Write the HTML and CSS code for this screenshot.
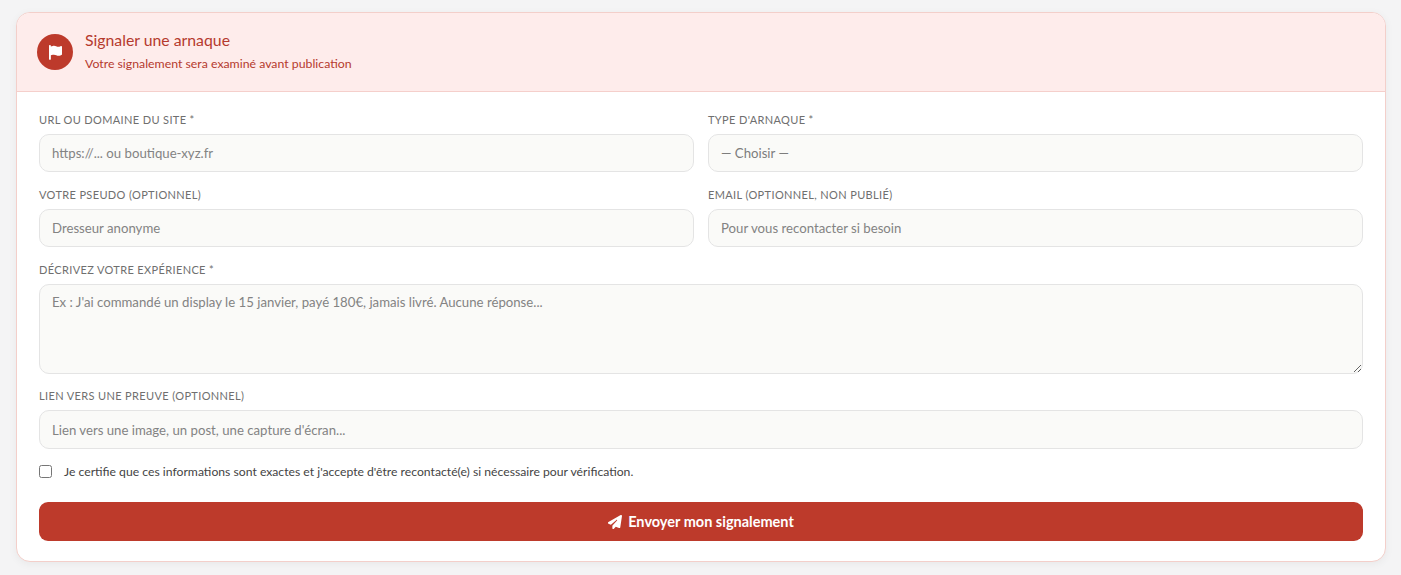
FILE: index.html
```html
<!DOCTYPE html>
<html lang="fr">
<head>
<meta charset="utf-8">
<title>Signaler une arnaque</title>
<link rel="stylesheet" href="styles.css">
</head>
<body>
<section class="card">
  <header class="head">
    <span class="badge">
      <svg class="flag" viewBox="0 0 448 512" aria-hidden="true"><path fill="currentColor" d="M64 32C64 14.300 49.700 0 32 0S0 14.300 0 32V480c0 17.700 14.300 32 32 32s32-14.300 32-32V352l64.300-16.100c41.100-10.300 84.600-5.500 122.500 13.400c44.200 22.100 95.500 24.800 141.700 7.400l34.700-13c12.500-4.700 20.800-16.600 20.800-30V66.100c0-23-24.200-38-44.800-27.700l-9.600 4.800c-46.300 23.200-100.800 23.200-147.100 0c-35.100-17.600-75.400-22-113.500-12.500L64 48V32z"/></svg>
    </span>
    <div class="head-text">
      <h2 class="title">Signaler une arnaque</h2>
      <p class="sub">Votre signalement sera examiné avant publication</p>
    </div>
  </header>
  <form class="form">
    <div class="row">
      <div class="field">
        <label class="label">URL ou domaine du site *</label>
        <input class="input" type="text" placeholder="https://... ou boutique-xyz.fr">
      </div>
      <div class="field">
        <label class="label">Type d'arnaque *</label>
        <div class="input select">— Choisir —</div>
      </div>
    </div>
    <div class="row">
      <div class="field">
        <label class="label">Votre pseudo (optionnel)</label>
        <input class="input" type="text" placeholder="Dresseur anonyme">
      </div>
      <div class="field">
        <label class="label">Email (optionnel, non publié)</label>
        <input class="input" type="text" placeholder="Pour vous recontacter si besoin">
      </div>
    </div>
    <div class="field field-area">
      <label class="label">Décrivez votre expérience *</label>
      <textarea class="input area" placeholder="Ex : J'ai commandé un display le 15 janvier, payé 180€, jamais livré. Aucune réponse..."></textarea>
    </div>
    <div class="field">
      <label class="label">Lien vers une preuve (optionnel)</label>
      <input class="input tall" type="text" placeholder="Lien vers une image, un post, une capture d'écran...">
    </div>
    <label class="check">
      <input class="box" type="checkbox">
      <span>Je certifie que ces informations sont exactes et j'accepte d'être recontacté(e) si nécessaire pour vérification.</span>
    </label>
    <button class="send" type="button">
      <svg class="plane" viewBox="0 0 512 512" aria-hidden="true"><path fill="currentColor" d="M498.100 5.600c10.100 7 15.400 19.100 13.500 31.200l-64 416c-1.500 9.700-7.400 18.200-16 23s-18.900 5.400-28 1.600L284 427.700l-68.500 74.100c-8.900 9.700-22.900 12.900-35.200 8.100S160 493.200 160 480V396.400c0-4 1.500-7.800 4.200-10.700L331.800 202.800c5.800-6.300 5.600-16-.4-22s-15.700-6.400-22-.7L106 360.800 17.700 316.600C7.100 311.300 .3 300.700 0 288.900s5.900-22.800 16.100-28.700l448-256c10.700-6.100 23.900-5.500 34 1.400z"/></svg>
      Envoyer mon signalement
    </button>
  </form>
</section>
</body>
</html>
```
FILE: styles.css
```css
* { box-sizing: border-box; }
html, body { margin: 0; }
body {
  background: #f4f4f5;
  padding: 12px 15px 14px 16px;
  font-family: "Lato", "Noto Sans", sans-serif;
  color: #333;
}
.card {
  background: #fff;
  border: 1px solid #f3cfca;
  border-radius: 14px;
  overflow: hidden;
  box-shadow: 0 2px 8px rgba(0,0,0,.05);
  height: 550px;
}
.head {
  display: flex;
  align-items: center;
  gap: 12px;
  height: 79px;
  padding: 0 20px;
  background: #feeceb;
  border-bottom: 1px solid #f5cfcb;
}
.badge {
  width: 36px;
  height: 36px;
  flex: none;
  border-radius: 50%;
  background: #bd3a2b;
  color: #fff;
  display: flex;
  align-items: center;
  justify-content: center;
}
.flag { width: 13px; height: 15px; }
.head-text { display: flex; flex-direction: column; gap: 7px; margin-top: -2px; }
.title { margin: 0; font-size: 15.8px; line-height: 18px; font-weight: 400; color: #b53a2e; }
.sub { margin: 0; font-size: 12.3px; line-height: 15px; color: #b53a2e; }
.form {
  display: flex;
  flex-direction: column;
  padding: 20px 22px 0;
}
.row { display: grid; grid-template-columns: 1fr 1fr; gap: 14px; }
.field { display: flex; flex-direction: column; }
.row, .form > .field { margin-bottom: 15px; }
.form > .field-area { margin-bottom: 14px; }
.label {
  font-size: 11px;
  line-height: 15px;
  height: 15px;
  margin-bottom: 7px;
  text-transform: uppercase;
  letter-spacing: .36px;
  color: #6f6f6f;
}
.input {
  display: block;
  width: 100%;
  height: 38px;
  padding: 0 12px;
  background: #fafaf8;
  border: 1px solid #e4e4e4;
  border-radius: 10px;
  font: inherit;
  font-size: 13.2px;
  color: #7d7d7d;
  outline: none;
}
.input::placeholder { color: #838383; opacity: 1; }
.select { display: flex; align-items: center; }
.area { height: 90px; padding: 9px 12px; resize: vertical; }
.tall { height: 39px; }
.form > .field:has(.tall) { margin-bottom: 14px; }
.check {
  display: flex;
  align-items: center;
  gap: 12px;
  height: 16px;
  margin: 0 0 23px;
  font-size: 12.2px;
  color: #444;
}
.box { width: 13px; height: 13px; margin: 0; flex: none; }
.send {
  display: flex;
  align-items: center;
  justify-content: center;
  gap: 6px;
  height: 39px;
  background: #bd3a2b;
  color: #fff;
  border: 0;
  border-radius: 9px;
  font: inherit;
  font-size: 14.5px;
  font-weight: 700;
}
.plane { width: 14px; height: 14px; }
```
